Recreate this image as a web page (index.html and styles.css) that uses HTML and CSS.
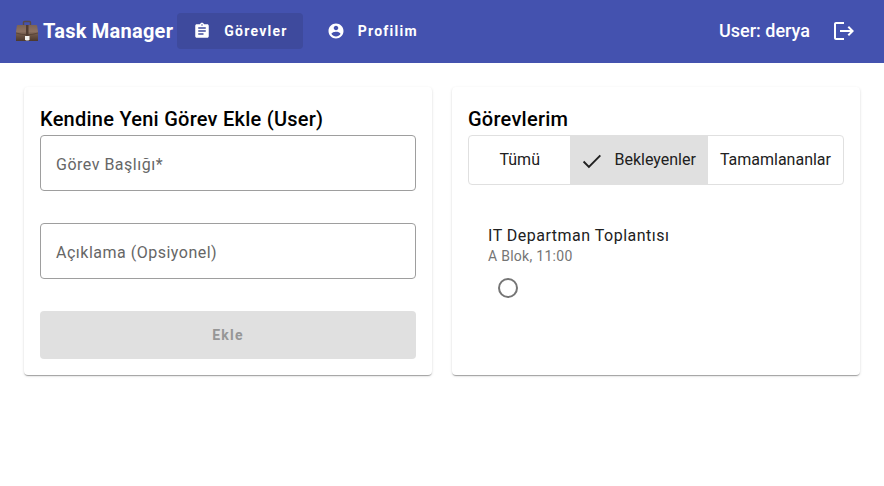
FILE: index.html
```html
<!DOCTYPE html>
<html lang="tr">
<head>
<meta charset="utf-8">
<meta name="viewport" content="width=device-width, initial-scale=1">
<title>Task Manager</title>
<link rel="stylesheet" href="styles.css">
</head>
<body>
<header class="toolbar">
  <div class="brand">
    <svg class="brand-icon" viewBox="0 0 22 22" aria-hidden="true">
      <defs>
        <linearGradient id="leather" x1="0" y1="0" x2="0" y2="1">
          <stop offset="0" stop-color="#7c6354"/>
          <stop offset="0.4" stop-color="#8d7262"/>
          <stop offset="0.6" stop-color="#6f5748"/>
          <stop offset="1" stop-color="#4c382d"/>
        </linearGradient>
      </defs>
      <path d="M7.500 5V2.500Q7.500 1.500 8.500 1.500h5Q14.500 1.500 14.500 2.500V5" fill="none" stroke="#594a45" stroke-width="1.400"/>
      <path d="M2 5h18q1 0 1.200 1L22 12v9H0v-9l.8-6Q1 5 2 5z" fill="url(#leather)"/>
      <path d="M0 13q11 3.500 22 0" fill="none" stroke="#4f3b30" stroke-width="0.700"/>
      <path d="M10 5h2.500v11H10z" fill="#513c31"/>
      <path d="M9 16h4.500v3.500l-1 1H10l-1-1z" fill="#f1efec"/>
    </svg>
    <span>Task Manager</span>
  </div>
  <nav class="nav">
    <a class="nav-link active" href="#gorevler" aria-current="page">
      <svg viewBox="0 0 24 24" aria-hidden="true"><path d="M19 3h-4.180C14.400 1.840 13.300 1 12 1s-2.400.84-2.820 2H5c-1.100 0-2 .9-2 2v14c0 1.100.9 2 2 2h14c1.100 0 2-.9 2-2V5c0-1.100-.9-2-2-2zm-7 0c.55 0 1 .45 1 1s-.45 1-1 1-1-.45-1-1 .45-1 1-1zm2 14H7v-2h7v2zm3-4H7v-2h10v2zm0-4H7V7h10v2z"/></svg>
      <span>Görevler</span>
    </a>
    <a class="nav-link" href="#profilim">
      <svg viewBox="0 0 24 24" aria-hidden="true"><path d="M12 2C6.480 2 2 6.480 2 12s4.480 10 10 10 10-4.480 10-10S17.520 2 12 2zm0 3c1.660 0 3 1.340 3 3s-1.340 3-3 3-3-1.340-3-3 1.340-3 3-3zm0 14.200c-2.500 0-4.710-1.280-6-3.220.03-1.990 4-3.080 6-3.080 1.990 0 5.970 1.090 6 3.080-1.290 1.940-3.500 3.220-6 3.220z"/></svg>
      <span>Profilim</span>
    </a>
  </nav>
  <span class="user">User: derya</span>
  <button class="logout" type="button" aria-label="Çıkış">
    <svg viewBox="0 0 24 24" aria-hidden="true"><path d="M17 7l-1.410 1.410L18.170 11H8v2h10.170l-2.580 2.580L17 17l5-5zM4 5h8V3H4c-1.100 0-2 .9-2 2v14c0 1.100.9 2 2 2h8v-2H4V5z"/></svg>
  </button>
</header>
<main class="board">
  <form class="card">
    <h2 class="card-title">Kendine Yeni Görev Ekle (User)</h2>
    <div class="field">
      <input id="title" type="text" required>
      <label for="title">Görev Başlığı*</label>
    </div>
    <div class="field">
      <input id="description" type="text">
      <label for="description">Açıklama (Opsiyonel)</label>
    </div>
    <button class="submit" type="submit" disabled>Ekle</button>
  </form>
  <section class="card">
    <h2 class="card-title">Görevlerim</h2>
    <div class="filters" role="group" aria-label="Görev filtresi">
      <button type="button" aria-pressed="false">Tümü</button>
      <button type="button" aria-pressed="true">
        <svg viewBox="0 0 24 24" aria-hidden="true"><path d="M1.900 13.800L8.300 20.200 22 6.500" fill="none" stroke="currentColor" stroke-width="2.300"/></svg>
        <span>Bekleyenler</span>
      </button>
      <button type="button" aria-pressed="false">Tamamlananlar</button>
    </div>
    <ul class="tasks">
      <li class="task">
        <h3 class="task-title">IT Departman Toplantısı</h3>
        <p class="task-detail">A Blok, 11:00</p>
        <button class="task-toggle" type="button" aria-label="Tamamlandı olarak işaretle">
          <svg viewBox="0 0 24 24" aria-hidden="true"><circle cx="12" cy="12" r="9" fill="none" stroke="currentColor" stroke-width="2"/></svg>
        </button>
      </li>
    </ul>
  </section>
</main>
</body>
</html>
```
FILE: styles.css
```css
* {
  box-sizing: border-box;
}

body {
  margin: 0;
  background: #fff;
  color: #000;
  font-family: Roboto, "Liberation Sans", sans-serif;
  font-size: 16px;
}

button,
input {
  font: inherit;
}

svg {
  display: block;
  flex: none;
  fill: currentColor;
}

.toolbar {
  display: flex;
  align-items: center;
  padding: 13px 28px 14px 16px;
  background: #4452af;
  color: #fff;
}

.brand {
  display: flex;
  align-items: center;
  gap: 5px;
  font-size: 20px;
  font-weight: 700;
  letter-spacing: 0.0125em;
  line-height: 32px;
}

.brand-icon {
  width: 22px;
  height: 22px;
}

.nav {
  display: flex;
  gap: 8px;
  margin: 0 auto 0 4px;
}

.nav-link {
  display: flex;
  align-items: center;
  gap: 13px;
  padding: 0 15px 0 16px;
  border-radius: 4px;
  color: inherit;
  font-size: 14px;
  font-weight: 700;
  letter-spacing: 0.09em;
  line-height: 36px;
  text-decoration: none;
}

.nav-link.active {
  background: #3e4a9d;
}

.nav-link svg {
  width: 18px;
  height: 18px;
}

.user {
  font-size: 18px;
  font-weight: 500;
  line-height: 36px;
}

.logout {
  margin: 0 0 0 22px;
  padding: 0;
  border: 0;
  background: none;
  color: inherit;
}

.logout svg,
.task-toggle svg {
  width: 24px;
  height: 24px;
}

.board {
  display: grid;
  grid-template-columns: repeat(auto-fit, minmax(340px, 1fr));
  gap: 20px;
  padding: 24px;
}

.card {
  padding: 16px;
  border-radius: 4px;
  background: #fff;
  box-shadow: 0 2px 1px -1px rgba(0, 0, 0, 0.2), 0 1px 1px rgba(0, 0, 0, 0.14), 0 1px 3px rgba(0, 0, 0, 0.12);
}

.card-title {
  margin: 0;
  font-size: 20px;
  font-weight: 500;
  letter-spacing: 0.0125em;
  line-height: 32px;
}

.field {
  position: relative;
  margin-bottom: 32px;
}

.field input {
  display: block;
  width: 100%;
  height: 56px;
  padding: 0 16px;
  border: 1px solid #9e9e9e;
  border-radius: 4px;
  background: none;
}

.field label {
  position: absolute;
  top: 18px;
  left: 16px;
  color: #666;
  letter-spacing: 0.03125em;
  line-height: 24px;
  pointer-events: none;
}

.submit {
  display: block;
  width: 100%;
  height: 48px;
  border: 0;
  border-radius: 4px;
  background: #e0e0e0;
  color: #969696;
  font-size: 14px;
  font-weight: 700;
  letter-spacing: 0.09em;
}

.filters {
  display: flex;
  overflow: hidden;
  border: 1px solid #e0e0e0;
  border-radius: 4px;
}

.filters button {
  display: flex;
  flex: 1;
  align-items: center;
  justify-content: center;
  gap: 12px;
  padding: 0 12px;
  border: 0;
  background: none;
  color: #212121;
  line-height: 48px;
}

.filters button[aria-pressed="true"] {
  background: #e0e0e0;
}

.filters svg {
  width: 20px;
  height: 20px;
}

.tasks {
  margin: 0;
  padding: 40px 20px 0;
  list-style: none;
}

.task-title {
  margin: 0;
  color: #212121;
  font-size: 16px;
  font-weight: 400;
  letter-spacing: 0.03125em;
  line-height: 22px;
}

.task-detail {
  margin: 0;
  color: #757575;
  font-size: 14px;
  letter-spacing: 0.02em;
  line-height: 18px;
}

.task-toggle {
  padding: 11px 8px 9px;
  border: 0;
  background: none;
  color: #757575;
}
```
